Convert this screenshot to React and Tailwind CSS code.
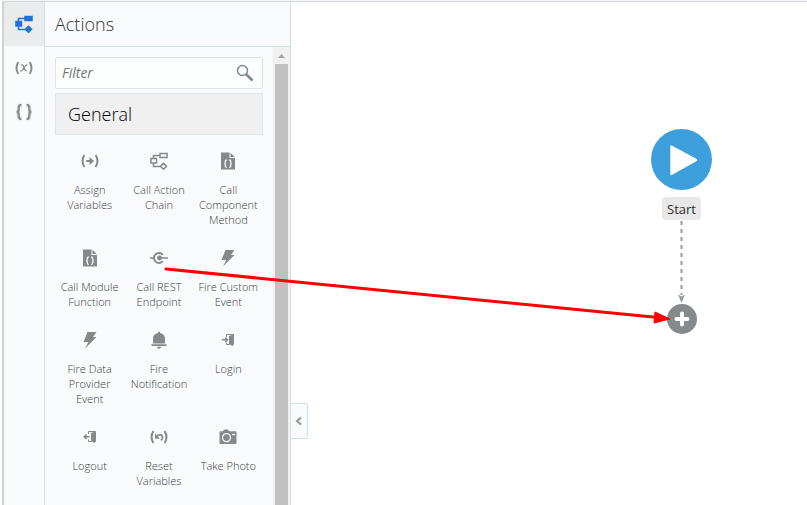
import React from "react";

function Chain({ filled = false }) {
  return (
    <svg width="18" height="18" viewBox="0 0 18 18" fill={filled ? "currentColor" : "none"} stroke="currentColor" strokeWidth="1.5" aria-hidden="true">
      <path d="M3.5 7V3.5H10M3.5 11v3.5H11" fill="none" />
      <rect x="10" y="1.500" width="7" height="4" />
      <rect x="1" y="6.500" width="5.500" height="4.500" />
      <path d="M13.500 11.300l3 3-3 3-3-3z" />
    </svg>
  );
}

function Assign() {
  return (
    <svg width="18" height="18" viewBox="0 0 18 18" fill="none" stroke="currentColor" strokeWidth="2" aria-hidden="true">
      <path d="M3.4 3Q-.4 9 3.4 15M14.6 3q3.800 6 0 12M5.3 9H10" />
      <path d="M8.500 5L13 9l-4.500 4z" fill="currentColor" stroke="none" />
    </svg>
  );
}

function Reset() {
  return (
    <svg width="18" height="18" viewBox="0 0 18 18" fill="none" stroke="currentColor" strokeWidth="2" aria-hidden="true">
      <path d="M3.4 3Q-.4 9 3.4 15M14.6 3q3.800 6 0 12" />
      <path d="M6.5 8.6C8.5 6 12.5 6.500 12.500 9.500Q12.500 11.500 10.800 12.300" strokeWidth="1.700" />
      <path d="M5 5.500V10.700H10z" fill="currentColor" stroke="none" />
    </svg>
  );
}

function FileBraces() {
  return (
    <svg width="18" height="18" viewBox="0 0 18 18" aria-hidden="true">
      <path d="M2 .5h8.500v5.500H16v11.500H2z" fill="currentColor" />
      <path d="M11.500 .8L15.800 5h-4.300z" fill="currentColor" />
      <path d="M7.800 8Q6.300 8 6.300 9.500v1Q6.300 11.700 5.300 11.700q1 0 1 1.200v1q0 1.500 1.500 1.500M10.200 8q1.500 0 1.500 1.500v1q0 1.200 1 1.200-1 0-1 1.200v1q0 1.500-1.500 1.500" fill="none" stroke="#f8fafc" strokeWidth="1.300" />
    </svg>
  );
}

function Rest() {
  return (
    <svg width="18" height="18" viewBox="0 0 18 18" fill="none" stroke="currentColor" strokeWidth="1.600" aria-hidden="true">
      <path d="M0 9h4M9 9h9" />
      <path d="M12.800 5.800a5 5 0 1 0 0 6.400" strokeWidth="2" />
      <circle cx="9.500" cy="9" r="2.400" fill="currentColor" stroke="none" />
    </svg>
  );
}

function Bolt() {
  return (
    <svg width="18" height="18" viewBox="0 0 18 18" fill="currentColor" aria-hidden="true">
      <path d="M6.500 1H15.500l-3.500 5H15.500L4 17.500l3.300-6.500H2.500z" />
    </svg>
  );
}

function Bell() {
  return (
    <svg width="18" height="18" viewBox="0 0 18 18" fill="currentColor" aria-hidden="true">
      <path d="M8 .8h2v1.300c3.300 .6 5 2.700 5 5.400v5H3V7.500C3 4.800 4.700 2.700 8 2.100zM1.500 13.200h15v1.800h-15zM7 15.700h4a2 2 0 0 1-4 0z" />
    </svg>
  );
}

function Door({ out = false }) {
  return (
    <svg width="18" height="18" viewBox="0 0 18 18" fill="currentColor" aria-hidden="true">
      <path d="M10 5L14 3.500v11.500L10 13.500z" />
      <path d="M7.500 6V3.500H14.500v10H13M7.500 11.500v2H10" fill="none" stroke="currentColor" strokeWidth="1" />
      {out ? (
        <path d="M8.500 8.700H3.500M5.500 6.500L3.300 8.700 5.500 10.900" fill="none" stroke="currentColor" strokeWidth="1.500" />
      ) : (
        <path d="M3 8.700H8.500M6.300 6.500L8.500 8.700 6.300 10.900" fill="none" stroke="currentColor" strokeWidth="1.500" />
      )}
    </svg>
  );
}

function Camera() {
  return (
    <svg width="18" height="18" viewBox="0 0 18 18" aria-hidden="true">
      <path d="M1.500 3.300H4L5 1.600h4l1 1.700h6.500a1 1 0 0 1 1 1v10.700a1 1 0 0 1-1 1h-15a1 1 0 0 1-1-1V4.300a1 1 0 0 1 1-1z" fill="currentColor" />
      <circle cx="7.500" cy="9.600" r="4" fill="none" stroke="#f8fafc" strokeWidth="1.300" />
      <path d="M13 5.800h3v1.400h-3z" fill="#f8fafc" />
    </svg>
  );
}

const actions = [
  { label: "Assign Variables", icon: <Assign /> },
  { label: "Call Action Chain", icon: <Chain /> },
  { label: "Call Component Method", icon: <FileBraces /> },
  { label: "Call Module Function", icon: <FileBraces /> },
  { label: "Call REST Endpoint", icon: <Rest /> },
  { label: "Fire Custom Event", icon: <Bolt /> },
  { label: "Fire Data Provider Event", icon: <Bolt /> },
  { label: "Fire Notification", icon: <Bell /> },
  { label: "Login", icon: <Door /> },
  { label: "Logout", icon: <Door out /> },
  { label: "Reset Variables", icon: <Reset /> },
  { label: "Take Photo", icon: <Camera /> },
];

function Rail() {
  return (
    <nav aria-label="Editor views" className="flex w-[41px] shrink-0 flex-col border-r border-[#d3e0e6] bg-[#f8fafc] text-[#8a8d90]">
      <button aria-label="Actions" className="flex h-11 items-center justify-center bg-[#e9ebec] text-[#2372d3]">
        <Chain filled />
      </button>
      <button aria-label="Variables" className="flex h-11 items-center justify-center">
        <svg width="18" height="18" viewBox="0 0 18 18" fill="none" stroke="currentColor" strokeWidth="2" aria-hidden="true">
          <path d="M3.400 3Q-.400 9 3.400 15M14.600 3q3.800 6 0 12" />
          <path d="M6 6.300Q8 5 8.600 8T11.600 12M12.500 6Q11 5.500 9 9T5.300 12" strokeWidth="1.300" />
        </svg>
      </button>
      <button aria-label="Code" className="flex h-11 items-center justify-center">
        <svg width="18" height="18" viewBox="0 0 18 18" fill="none" stroke="currentColor" strokeWidth="2.400" aria-hidden="true">
          <path d="M6.500 2Q3.700 2 3.700 4.500v2Q3.700 9 1.500 9q2.200 0 2.200 2.500v2q0 2.500 2.800 2.500M11.500 2q2.800 0 2.800 2.500v2q0 2.500 2.200 2.500-2.200 0-2.200 2.500v2q0 2.500-2.800 2.500" />
        </svg>
      </button>
    </nav>
  );
}

function Palette() {
  return (
    <aside className="flex w-[246px] shrink-0 flex-col border-r border-[#d3e0e6] bg-[#f8fafc]">
      <h1 className="h-[45px] shrink-0 border-b border-[#d3e0e6] px-2.5 text-lg leading-[44px] font-light text-[#2f3032]">Actions</h1>
      <div className="flex min-h-0 flex-1">
        <div className="min-w-0 flex-1 overflow-hidden px-2.5 pt-2.5">
          <div className="flex h-8 items-center rounded-xs border border-[#dfe4e7] bg-[#fcfdfd] pr-2">
            <input type="text" aria-label="Filter actions" placeholder="Filter" className="min-w-0 flex-1 bg-transparent px-1.5 text-sm italic outline-none placeholder:text-[#737577]" />
            <svg width="18" height="18" viewBox="0 0 18 18" fill="none" stroke="#7e8a95" aria-hidden="true">
              <circle cx="6.500" cy="6.500" r="5" strokeWidth="1.500" />
              <path d="M10 10l6.500 6.500" strokeWidth="2.600" />
            </svg>
          </div>
          <h2 className="mt-1 h-[42px] border border-[#dfe4e7] bg-[#f0f0f0] px-3 text-lg leading-10 font-light text-black">General</h2>
          <ul className="mt-[17px] grid grid-cols-3 gap-y-[22px]">
            {actions.map((action) => (
              <li key={action.label}>
                <button className="flex w-full flex-col items-center gap-3 text-[#85898c]">
                  {action.icon}
                  <span className="w-16 text-[11px] leading-[15px] font-light text-[#3c3f42]">{action.label}</span>
                </button>
              </li>
            ))}
          </ul>
        </div>
        <div aria-hidden="true" className="flex w-[17px] shrink-0 flex-col bg-[#f1f1f1] px-0.5">
          <svg className="h-[17px] w-[13px] shrink-0" viewBox="0 0 13 17" fill="#a3a3a3">
            <path d="M6.500 7L10 11H3z" />
          </svg>
          <div className="flex-1 bg-[#c1c1c1]" />
        </div>
      </div>
    </aside>
  );
}

function Canvas() {
  return (
    <main className="relative min-w-0 flex-1 bg-white">
      <button aria-label="Collapse panel" className="absolute top-[401px] left-0 flex h-9 w-[17px] items-center justify-center rounded-r-xs border border-l-0 border-[#d3e0e6] bg-[#f8fafc]">
        <svg width="8" height="10" viewBox="0 0 8 10" fill="none" stroke="#929699" strokeWidth="2" aria-hidden="true">
          <path d="M6 1.500L2 5l4 3.500" />
        </svg>
      </button>
      <div className="absolute top-[127px] left-[360px] flex w-[61px] flex-col items-center">
        <svg width="61" height="61" viewBox="0 0 60 60" aria-hidden="true">
          <circle cx="30" cy="30" r="30" fill="#3d9fdb" />
          <path d="M20 17v27.500L44.500 30.500z" fill="#fff" stroke="#fff" strokeWidth="2" strokeLinejoin="round" />
        </svg>
        <span className="mt-[7px] h-[23px] rounded bg-[#e8e8e8] px-[5px] text-[13px] leading-6 text-[#2b2b2b]">Start</span>
        <svg width="11" height="84" viewBox="0 0 11 84" aria-hidden="true">
          <path d="M5.500 1v74" stroke="#929ca5" strokeWidth="2" strokeDasharray="4 4" />
          <path d="M2 74.500L5.500 76.500l3.500-2L5.500 83z" fill="#929ca5" />
        </svg>
        <button aria-label="Add action">
          <svg width="30" height="30" viewBox="0 0 30 30" aria-hidden="true">
            <circle cx="15" cy="15" r="15" fill="#858a8d" />
            <path d="M15 9.500v11M9.500 15h11" stroke="#fff" strokeWidth="4" strokeLinecap="round" />
          </svg>
        </button>
      </div>
    </main>
  );
}

export default function App() {
  return (
    <div className="relative flex h-screen flex-col overflow-hidden bg-white pl-0.5 font-['Open_Sans','Noto_Sans',sans-serif]">
      <div className="h-0.5 shrink-0 border-b border-[#d4d8dc] bg-[#f3f4f5]" />
      <div className="flex min-h-0 flex-1 border-l-2 border-[#d0d2d4]">
        <Rail />
        <Palette />
        <Canvas />
      </div>
      <svg aria-hidden="true" className="pointer-events-none absolute top-[264px] left-[160px]" width="515" height="64" viewBox="0 0 515 64">
        <path d="M6 5L498 53.500" stroke="#ff0000" strokeWidth="3" strokeLinecap="round" />
        <path d="M495 48L510 55l-16 4z" fill="#ff0000" stroke="#ff0000" strokeLinejoin="round" />
      </svg>
    </div>
  );
}
